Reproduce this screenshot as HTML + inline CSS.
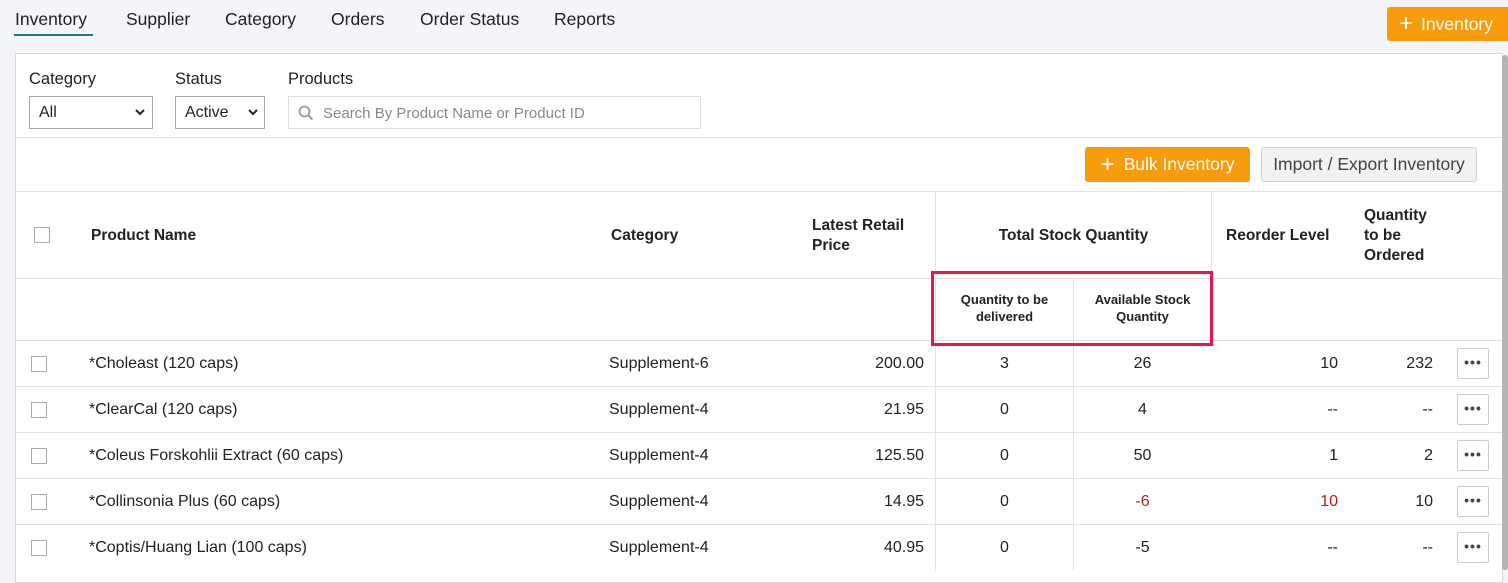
<!DOCTYPE html>
<html><head><meta charset="utf-8"><style>
*{margin:0;padding:0;box-sizing:border-box}
body{width:1508px;height:570px;overflow:hidden;background:#f4f5f8;font-family:"Liberation Sans",sans-serif;color:#222;position:relative;font-size:16px}
.a{position:absolute;white-space:nowrap}
.tab{top:9px;font-size:17.5px;color:#222}
.panel{position:absolute;left:15px;top:53px;width:1488px;height:530px;background:#fff;border:1px solid #d8d8d8}
.hl{position:absolute;height:1px;background:#e2e2e2}
.vl{position:absolute;width:1px;background:#e2e2e2}
.cb{position:absolute;width:16px;height:16px;border:1px solid #aaa;background:#fff}
.btn{position:absolute;background:#f89c0e;color:#fff;border-radius:3px;font-size:17.5px;display:flex;align-items:center;justify-content:center}
.sel{position:absolute;border:1px solid #aaa;height:33px;top:96px;background:#fff;font-size:16px;padding:7px 9px}
.th{font-weight:bold;font-size:15.5px;line-height:20px}
.r{text-align:right}
.c{text-align:center}
.red{color:#c4161c}
.more{position:absolute;left:1457px;width:32px;height:31px;border:1px solid #ccc;background:#fff;border-radius:2px;text-align:center;font-weight:bold;font-size:14px;line-height:26px;color:#444;letter-spacing:1px}
.chev{position:absolute;top:11px}
</style></head><body>
<div class="a tab" style="left:15px">Inventory</div>
<div style="position:absolute;left:14px;top:34px;width:79px;height:2px;background:#1f7a7a"></div>
<div class="a tab" style="left:126px">Supplier</div>
<div class="a tab" style="left:225px">Category</div>
<div class="a tab" style="left:331px">Orders</div>
<div class="a tab" style="left:420px">Order Status</div>
<div class="a tab" style="left:554px">Reports</div>
<div class="btn" style="left:1387px;top:7px;width:125px;height:34px;justify-content:flex-start;padding-left:12px"><span style="font-size:24px;margin-right:8px;line-height:1">+</span>Inventory</div>
<div class="panel"></div>
<div style="position:absolute;left:1502px;top:55px;width:6px;height:515px;background:#b5b5b5;border-radius:3px"></div>
<div class="a" style="left:29px;top:70px;font-size:16.5px">Category</div>
<div class="a" style="left:175px;top:70px;font-size:16.5px">Status</div>
<div class="a" style="left:288px;top:70px;font-size:16.5px">Products</div>
<div class="sel" style="left:29px;width:124px">All<svg class="chev" style="right:7px" width="10" height="8" viewBox="0 0 10 8"><path d="M1 2l4 4 4-4" fill="none" stroke="#222" stroke-width="2"/></svg></div>
<div class="sel" style="left:175px;width:90px">Active<svg class="chev" style="right:6px" width="10" height="8" viewBox="0 0 10 8"><path d="M1 2l4 4 4-4" fill="none" stroke="#222" stroke-width="2"/></svg></div>
<div class="sel" style="left:288px;width:413px;border-color:#ddd;color:#888;font-size:15px;padding-left:34px;padding-top:8px">Search By Product Name or Product ID
<svg style="position:absolute;left:9px;top:8px" width="16" height="16" viewBox="0 0 16 16"><circle cx="6.5" cy="6.5" r="5" fill="none" stroke="#999" stroke-width="1.8"/><path d="M10 10l4.5 4.5" stroke="#999" stroke-width="2"/></svg></div>
<div class="hl" style="left:16px;top:137px;width:1486px"></div>
<div class="btn" style="left:1085px;top:147px;width:165px;height:35px"><span style="font-size:24px;margin-right:9px;line-height:1">+</span>Bulk Inventory</div>
<div class="a" style="left:1261px;top:147px;width:216px;height:35px;background:#f2f2f2;border:1px solid #d4d4d4;border-radius:3px;font-size:17.5px;color:#444;line-height:33px;text-align:center">Import / Export Inventory</div>
<div class="hl" style="left:16px;top:191px;width:1486px"></div>
<div class="hl" style="left:16px;top:278px;width:1486px"></div>
<div class="hl" style="left:16px;top:340px;width:1486px"></div>
<div class="hl" style="left:16px;top:386px;width:1486px"></div>
<div class="hl" style="left:16px;top:432px;width:1486px"></div>
<div class="hl" style="left:16px;top:478px;width:1486px"></div>
<div class="hl" style="left:16px;top:524px;width:1486px"></div>
<div class="vl" style="left:935px;top:191px;height:380px"></div>
<div class="vl" style="left:1073px;top:278px;height:292px"></div>
<div class="vl" style="left:1211px;top:191px;height:150px"></div>
<div class="cb" style="left:34px;top:227px"></div>
<div class="a th" style="left:91px;top:226px">Product Name</div>
<div class="a th" style="left:611px;top:226px">Category</div>
<div class="a th" style="left:812px;top:216px">Latest Retail<br>Price</div>
<div class="a th c" style="left:936px;width:275px;top:226px">Total Stock Quantity</div>
<div class="a th" style="left:1226px;top:226px">Reorder Level</div>
<div class="a th" style="left:1364px;top:206px">Quantity<br>to be<br>Ordered</div>
<div class="a c" style="left:936px;width:137px;top:291px;font-size:13px;font-weight:bold;line-height:17px">Quantity to be<br>delivered</div>
<div class="a c" style="left:1074px;width:137px;top:291px;font-size:13px;font-weight:bold;line-height:17px">Available Stock<br>Quantity</div>
<div style="position:absolute;left:931px;top:271px;width:282px;height:75px;border:3px solid #e8174a"></div>

<div class="cb" style="left:31px;top:356px"></div><div class="a" style="left:89px;top:355px">*Choleast (120 caps)</div><div class="a" style="left:609px;top:355px">Supplement-6</div><div class="a r" style="left:800px;width:124px;top:355px">200.00</div><div class="a c" style="left:936px;width:137px;top:355px">3</div><div class="a c" style="left:1074px;width:137px;top:355px">26</div><div class="a r" style="left:1240px;width:98px;top:355px">10</div><div class="a r" style="left:1340px;width:93px;top:355px">232</div><div class="more" style="top:348px">•••</div>

<div class="cb" style="left:31px;top:402px"></div><div class="a" style="left:89px;top:401px">*ClearCal (120 caps)</div><div class="a" style="left:609px;top:401px">Supplement-4</div><div class="a r" style="left:800px;width:124px;top:401px">21.95</div><div class="a c" style="left:936px;width:137px;top:401px">0</div><div class="a c" style="left:1074px;width:137px;top:401px">4</div><div class="a r" style="left:1240px;width:98px;top:401px">--</div><div class="a r" style="left:1340px;width:93px;top:401px">--</div><div class="more" style="top:394px">•••</div>

<div class="cb" style="left:31px;top:448px"></div><div class="a" style="left:89px;top:447px">*Coleus Forskohlii Extract (60 caps)</div><div class="a" style="left:609px;top:447px">Supplement-4</div><div class="a r" style="left:800px;width:124px;top:447px">125.50</div><div class="a c" style="left:936px;width:137px;top:447px">0</div><div class="a c" style="left:1074px;width:137px;top:447px">50</div><div class="a r" style="left:1240px;width:98px;top:447px">1</div><div class="a r" style="left:1340px;width:93px;top:447px">2</div><div class="more" style="top:440px">•••</div>

<div class="cb" style="left:31px;top:494px"></div><div class="a" style="left:89px;top:493px">*Collinsonia Plus (60 caps)</div><div class="a" style="left:609px;top:493px">Supplement-4</div><div class="a r" style="left:800px;width:124px;top:493px">14.95</div><div class="a c" style="left:936px;width:137px;top:493px">0</div><div class="a c red" style="left:1074px;width:137px;top:493px">-6</div><div class="a r red" style="left:1240px;width:98px;top:493px">10</div><div class="a r" style="left:1340px;width:93px;top:493px">10</div><div class="more" style="top:486px">•••</div>

<div class="cb" style="left:31px;top:540px"></div><div class="a" style="left:89px;top:539px">*Coptis/Huang Lian (100 caps)</div><div class="a" style="left:609px;top:539px">Supplement-4</div><div class="a r" style="left:800px;width:124px;top:539px">40.95</div><div class="a c" style="left:936px;width:137px;top:539px">0</div><div class="a c" style="left:1074px;width:137px;top:539px">-5</div><div class="a r" style="left:1240px;width:98px;top:539px">--</div><div class="a r" style="left:1340px;width:93px;top:539px">--</div><div class="more" style="top:532px">•••</div>
</body></html>
